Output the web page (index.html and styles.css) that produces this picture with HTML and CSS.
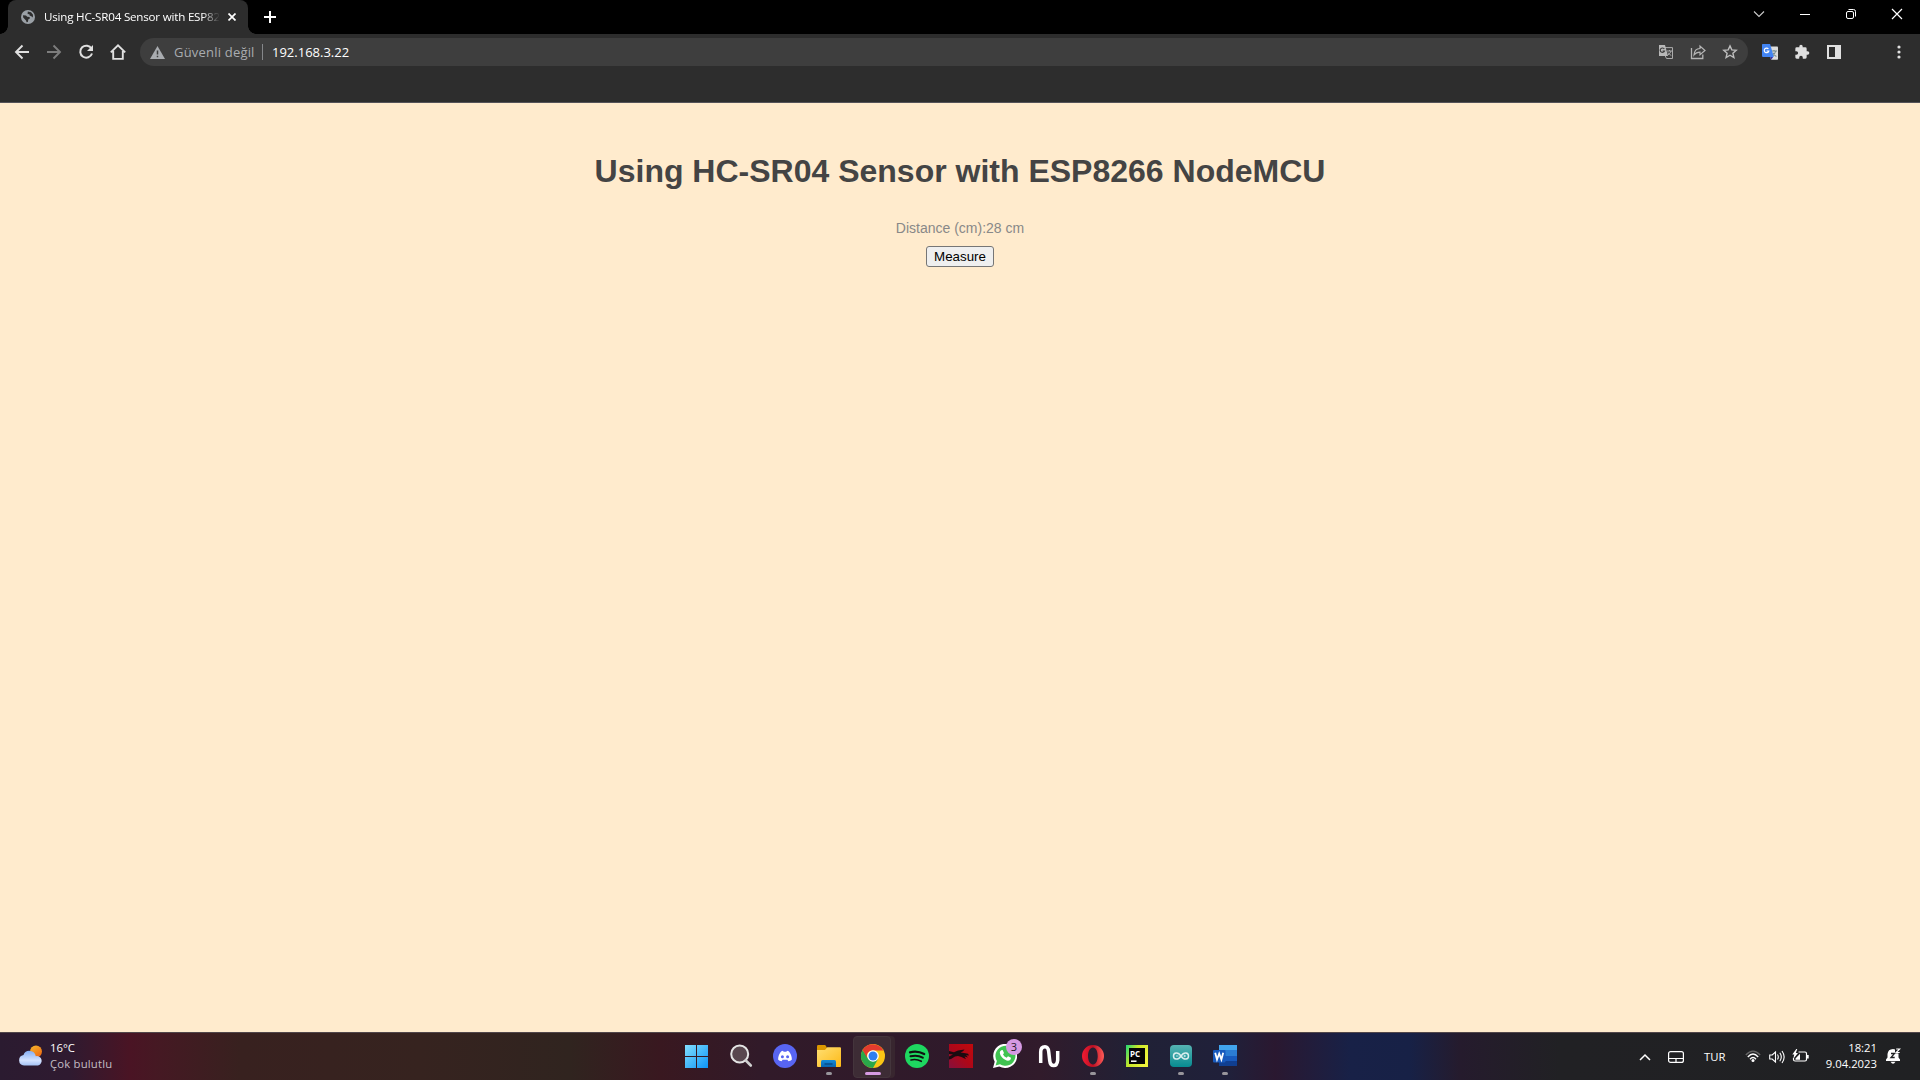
FILE: index.html
```html
<!DOCTYPE html>
<html lang="tr">
<head>
<meta charset="utf-8">
<title>Using HC-SR04 Sensor with ESP8266 NodeMCU</title>
<link rel="stylesheet" href="styles.css">
</head>
<body>
<div class="desktop">
  <header class="titlebar">
    <div class="tab">
      <svg class="globe" viewBox="0 0 14 14"><circle cx="7" cy="7" r="7" fill="#9aa0a6"/><path d="M2 5.200 5 5.400 6.200 6.800 8.600 6.900 8.900 8.600 7.400 9.300 6.800 12 5.600 12.200 5 10.400 2.200 7.600ZM6.800 1.600 10 2.200 12 4.800 11.800 7.400 10.300 6.200 8.600 5.600 8.400 4.200 6.600 3.900Z" fill="#2d2d2d"/></svg>
      <span class="tab-title">Using HC-SR04 Sensor with ESP82</span>
      <svg class="tab-close" viewBox="0 0 8 8"><path d="M.5.5l7 7M7.500.5l-7 7" stroke="#fff" stroke-width="1.700"/></svg>
    </div>
    <svg class="new-tab" viewBox="0 0 12 12"><path d="M6 0v12M0 6h12" stroke="#fff" stroke-width="2"/></svg>
    <div class="window-controls">
      <svg viewBox="0 0 46 28"><path d="M18 11.500l5 5 5-5" fill="none" stroke="#ccc" stroke-width="1.100"/></svg>
      <svg viewBox="0 0 46 28"><path d="M18 14.500h10" stroke="#fff"/></svg>
      <svg viewBox="0 0 46 28"><rect x="18.500" y="11.500" width="7" height="7" rx="1.500" fill="none" stroke="#fff"/><path d="M20.500 9.500h5a2 2 0 0 1 2 2v5" fill="none" stroke="#fff"/></svg>
      <svg viewBox="0 0 46 28"><path d="M18 9l10 10M28 9l-10 10" stroke="#fff" stroke-width="1.200"/></svg>
    </div>
  </header>

  <nav class="toolbar">
    <div class="nav-buttons">
      <svg viewBox="0 0 16 16"><path d="M15 8H2M8.500 1.500 2 8l6.500 6.500" fill="none" stroke="#e0e0e0" stroke-width="1.900"/></svg>
      <svg viewBox="0 0 16 16"><path d="M1 8h13M7.500 1.500 14 8l-6.500 6.500" fill="none" stroke="#7d7d7d" stroke-width="1.900"/></svg>
      <svg viewBox="0 0 16 16"><path d="M13.500 4.700A6 6 0 1 0 14 9.500" fill="none" stroke="#e0e0e0" stroke-width="2"/><path d="M15 1v6H9Z" fill="#e0e0e0"/></svg>
      <svg viewBox="0 0 16 16"><path d="M.8 8.400 8 1.400l7.200 7M3.200 7v7.900h9.600V7" fill="none" stroke="#e0e0e0" stroke-width="1.900"/></svg>
    </div>
    <div class="omnibox">
      <svg class="warning" viewBox="0 0 15 13"><path d="M7.500 0 15 13H0Z" fill="#a9acb0"/><path d="M7.500 4.500v4M7.500 9.700v1.600" stroke="#3e3e3e" stroke-width="1.500"/></svg>
      <span class="security">Güvenli değil</span>
      <span class="divider"></span>
      <span class="url">192.168.3.22</span>
      <div class="omnibox-icons">
        <svg viewBox="0 0 16 16"><path d="M7 3.600h7.500v10.900H8.500L7 11.500" fill="none" stroke="#aaa"/><path d="M1 1h6l3 11H1Z" fill="#b8b8b8"/><path d="M6.300 5A2.200 2.200 0 1 0 6.500 7H4.600" fill="none" stroke="#3e3e3e" stroke-width="1.200"/><path d="M9 7h5M11.500 6v1M13 7q-.7 2.500-3 4M10 8.500q1.200 2 3.300 3" fill="none" stroke="#aaa"/></svg>
        <svg viewBox="0 0 16 16"><path d="M1.500 4v10.500h11.300v-4" fill="none" stroke="#b5b5b5" stroke-width="1.300"/><path d="M4 11C4.300 7 6.500 4.600 10 4.500V2l5 4.500-5 4.200V8.200C7.400 8.200 5.500 9 4 11Z" fill="none" stroke="#b5b5b5" stroke-width="1.200"/></svg>
        <svg viewBox="0 0 16 16"><path d="M8 1.900l1.800 4 4.400.4-3.300 2.900 1 4.300L8 11.200l-3.900 2.300 1-4.300-3.300-2.900 4.400-.4Z" fill="none" stroke="#bdbdbd" stroke-width="1.400"/></svg>
      </div>
    </div>
    <div class="extensions">
      <svg viewBox="0 0 16 16"><path d="M6 2.600h9.200q.8 0 .8.800V15q0 .8-.8.800H9Z" fill="#dcdcdc"/><path d="M9 7h6M12 6v1M13.700 7q-.7 3-3.300 5M10.800 8.700q1.200 2.500 3.600 3.700" fill="none" stroke="#72898e" stroke-width="1.100"/><path d="M8.300 12.800h3L9 15.900Z" fill="#3730a8"/><path d="M.8 0h7.300l3.700 12.900H.8A.8.800 0 0 1 0 12.100V.8Q0 0 .8 0Z" fill="#4285f4"/><path d="M6.400 5A2.300 2.300 0 1 0 6.800 7H4.600" fill="none" stroke="#fff" stroke-width="1.200"/></svg>
      <svg viewBox="0 0 24 24"><path d="M20.500 11H19V7a2 2 0 0 0-2-2h-4V3.500a2.500 2.500 0 0 0-5 0V5H4a2 2 0 0 0-2 2v3.800h1.500a2.700 2.700 0 0 1 0 5.400H2V20a2 2 0 0 0 2 2h3.800v-1.500a2.700 2.700 0 0 1 5.400 0V22H17a2 2 0 0 0 2-2v-4h1.500a2.500 2.500 0 0 0 0-5Z" fill="#dedede"/></svg>
      <svg viewBox="0 0 16 16"><path d="M1 1h14v14H1ZM3 3v10h6V3Z" fill="#e0e0e0" fill-rule="evenodd"/></svg>
    </div>
    <svg class="more" viewBox="0 0 16 16"><g fill="#e0e0e0"><circle cx="8" cy="3" r="1.600"/><circle cx="8" cy="8" r="1.600"/><circle cx="8" cy="13" r="1.600"/></g></svg>
  </nav>

  <main class="page">
    <h1>Using HC-SR04 Sensor with ESP8266 NodeMCU</h1>
    <p>Distance (cm):28 cm</p>
    <button type="button">Measure</button>
  </main>

  <footer class="taskbar">
    <div class="weather">
      <svg viewBox="0 0 26 24"><defs><linearGradient id="sun" x2=".6" y2="1"><stop stop-color="#f6b92d"/><stop offset="1" stop-color="#ee6c13"/></linearGradient><linearGradient id="cloud" x2="0" y2="1"><stop stop-color="#84aef5"/><stop offset=".65" stop-color="#d3e2ff"/><stop offset="1" stop-color="#a5c2f4"/></linearGradient></defs><circle cx="18" cy="7.500" r="6" fill="url(#sun)"/><path d="M6 21.500a5.300 5.300 0 0 1-.5-10.500 6.400 6.400 0 0 1 12.300 1.200 4.700 4.700 0 1 1 2.200 9.300Z" fill="url(#cloud)"/></svg>
      <div class="weather-text"><span>16°C</span><span class="condition">Çok bulutlu</span></div>
    </div>

    <div class="apps">
      <div class="app"><svg viewBox="0 0 24 24"><defs><linearGradient id="win" gradientUnits="userSpaceOnUse" x1="0" y1="0" x2="24" y2="24"><stop stop-color="#85e1ff"/><stop offset="1" stop-color="#0a91f5"/></linearGradient></defs><path d="M0 1h11v11H0ZM12 1h11v11H12ZM0 13h11v11H0ZM12 13h11v11H12Z" fill="url(#win)"/></svg></div>
      <div class="app"><svg viewBox="0 0 24 24"><circle cx="10.700" cy="10" r="8.500" fill="#59474f" stroke="#e4e4e4" stroke-width="2"/><path d="M16.800 16.500l5 5" stroke="#d0d0d0" stroke-width="2.600" stroke-linecap="round"/></svg></div>
      <div class="app"><svg viewBox="0 0 24 24"><circle cx="12" cy="12" r="12" fill="#5865f2"/><path d="M8.400 7.200 10 6.700l.6 1h2.800l.6-1 1.700.5c2 1.800 3.200 5.400 3.200 8.300-1 1-2.200 1.500-3.500 1.800l-1-1.500H9.600l-1 1.500c-1.300-.3-2.500-.8-3.500-1.800 0-3 1.200-6.500 3.300-8.300Z" fill="#fff"/><circle cx="9.400" cy="12.800" r="1.500" fill="#5865f2"/><circle cx="14.600" cy="12.800" r="1.500" fill="#5865f2"/></svg></div>
      <div class="app open"><svg viewBox="0 0 24 24"><defs><linearGradient id="fold" x2="1" y2="1"><stop stop-color="#ffdf73"/><stop offset="1" stop-color="#fdb916"/></linearGradient><linearGradient id="dock" x2="0" y2="1"><stop stop-color="#138cda"/><stop offset="1" stop-color="#0864af"/></linearGradient></defs><path d="M0 2.200Q0 1 1.200 1h7L10 3.500V7H0Z" fill="#dc9800"/><path d="M0 6h8l2.300-2.700H23q1 0 1 1V22q0 1-1 1H1q-1 0-1-1Z" fill="url(#fold)"/><path d="M4 23v-5.500Q4 16 5.500 16h12q1.500 0 1.500 1.500V23Z" fill="url(#dock)"/><path d="M7.500 20h8" stroke="#064d89" stroke-width="1.500"/></svg></div>
      <div class="app active"><svg viewBox="0 0 24 24"><circle cx="12" cy="12" r="12" fill="#fbc615"/><path d="M1.600 6A12 12 0 0 0 12 24l5-9-5 2-5-3Z" fill="#2aa84a"/><path d="M1.600 6A12 12 0 0 1 22.400 6.500H12A5.500 5.500 0 0 0 6.800 15Z" fill="#e33b2e"/><circle cx="12" cy="12" r="5.800" fill="#fff"/><circle cx="12" cy="12" r="4.500" fill="#2f7ff0"/></svg></div>
      <div class="app"><svg viewBox="0 0 24 24"><circle cx="12" cy="12" r="12" fill="#1ed760"/><g fill="none" stroke="#111" stroke-linecap="round"><path d="M5 8.300q7.300-2 14.200 1.700" stroke-width="2.300"/><path d="M5.500 12.300q6.700-1.800 12.300 1.400" stroke-width="2"/><path d="M6 16q5.500-1.300 10.300 1.300" stroke-width="1.600"/></g></svg></div>
      <div class="app"><svg viewBox="0 0 24 24"><defs><linearGradient id="red" x2="1" y1="1" y2="0"><stop stop-color="#86103d"/><stop offset=".5" stop-color="#ae0718"/><stop offset="1" stop-color="#c2090c"/></linearGradient></defs><path d="M0 0h24v24H0Z" fill="url(#red)"/><path d="M0 7 5 8.300 9 6.500 15.500 5.500 14 7.300 11.500 8.500 15 9 19 9.800 20 11.500 17 11.300 19 13.500 15.500 12.500 17 15.300 12.500 13 9 12 6 12.500 2 15 0 15.500V12.500L4 10.500 0 10Z" fill="#1a0b10"/></svg></div>
      <div class="app"><svg viewBox="0 0 24 24"><path d="M0 24 1.700 17.800A12 12 0 1 1 6.300 22.400Z" fill="#fff"/><path d="M2.600 21.400 3.900 17A10 10 0 1 1 7 20.200Z" fill="#40c351"/><path d="M8.300 6.300 9.600 6l1.400 3-1 1.400q1.200 2.300 3.700 3.300L15 12.300l3 1.400c.1 2-1.500 3-3 3-3.500-.4-8-4.500-8.200-8 0-1 .7-2 1.500-2.400Z" fill="#fff"/></svg><span class="badge">3</span></div>
      <div class="app"><svg viewBox="0 0 24 24"><path d="M3.700 19V8Q3.700 2.700 8 2.700q3.200 0 3.700 5l1 8.800q.5 5 4 5t4-5.500V7" fill="none" stroke="#fff" stroke-width="3.500"/></svg></div>
      <div class="app open"><svg viewBox="0 0 24 24"><defs><linearGradient id="opera" x2="1" y2="0"><stop stop-color="#f11b32"/><stop offset=".5" stop-color="#bb1023"/><stop offset="1" stop-color="#ff5b58"/></linearGradient></defs><path d="M12 1a11 11 0 1 0 0 22 11 11 0 0 0 0-22ZM12 3.500c3 0 4.700 4 4.700 8.500S15 20.500 12 20.500 7 16.500 7 12s2-8.500 5-8.500Z" fill="url(#opera)" fill-rule="evenodd"/></svg></div>
      <div class="app"><svg viewBox="0 0 24 24"><defs><linearGradient id="py" x2="1" y2=".5"><stop stop-color="#1ed779"/><stop offset=".45" stop-color="#c6e629"/><stop offset="1" stop-color="#edf33b"/></linearGradient></defs><path d="M1 1h22v22H1Z" fill="url(#py)"/><path d="M4 4h16v16H4Z" fill="#050505"/><text x="5" y="12.500" class="pc">PC</text><path d="M6 17.200h5.500" stroke="#fff" stroke-width="1.500"/></svg></div>
      <div class="app open"><svg viewBox="0 0 24 24"><defs><linearGradient id="ard" x2="0" y2="1"><stop stop-color="#56b3b2"/><stop offset="1" stop-color="#078b91"/></linearGradient></defs><rect x="1" y="1" width="22" height="22" rx="4" fill="url(#ard)"/><path d="M12 12C9 7.300 4.500 8.500 4.500 12S9 16.700 12 12s7.500-3.500 7.500 0S15 16.700 12 12Z" fill="none" stroke="#d9eeee" stroke-width="1.500"/><path d="M7 12h2.500M14.500 12H17M15.700 10.800v2.400" stroke="#d9eeee" stroke-width=".8"/></svg></div>
      <div class="app open"><svg viewBox="0 0 24 24"><path d="M6 1h18v6H6Z" fill="#41a5ee"/><path d="M6 6h18v6H6Z" fill="#2b7cd3"/><path d="M6 12h18v5H6Z" fill="#185abd"/><path d="M6 17h18v5H6Z" fill="#103f91"/><rect y="6" width="12.500" height="12.500" rx="1" fill="#185abd"/><path d="M2.200 8.800 4 15.500 6.200 9.500 8.400 15.500 10.200 8.800" fill="none" stroke="#fff" stroke-width="1.800"/></svg></div>
    </div>

    <div class="tray">
      <svg class="chevron" viewBox="0 0 12 8"><path d="M1 7l5-5 5 5" fill="none" stroke="#fff" stroke-width="1.500"/></svg>
      <svg class="touchpad" viewBox="0 0 16 12"><rect x=".6" y=".6" width="14.800" height="10.800" rx="2" fill="none" stroke="#fff" stroke-width="1.200"/><path d="M1 7.500h14M8 7.500V11" stroke="#fff" stroke-width="1.200"/></svg>
      <span class="language">TUR</span>
      <svg class="wifi" viewBox="0 0 16 13"><path d="M.8 5Q8-2.800 15.200 5" fill="none" stroke="#666" stroke-width="1.300"/><path d="M2.800 7Q8 1 13.200 7M5 9.200q3-3.400 6 0" fill="none" stroke="#fff" stroke-width="1.300"/><circle cx="8" cy="10.500" r="1.500" fill="#fff"/></svg>
      <svg class="sound" viewBox="0 0 16 14"><path d="M.7 5h2.500L6.500 2v10L3.200 9H.7Z" fill="none" stroke="#fff" stroke-width="1.100"/><path d="M8.500 4.500q1.600 2.500 0 5M10.800 2.800q3 4.200 0 8.400M13 1q4.300 6 0 12" fill="none" stroke="#fff" stroke-width="1.100"/></svg>
      <svg class="battery" viewBox="0 0 17 14"><path d="M6.500 3H13q1.500 0 1.500 1.500v6Q14.500 12 13 12H3Q1.500 12 1.500 10.500V9" fill="none" stroke="#fff" stroke-width="1.200"/><path d="M15 6h1.700v3.500H15ZM3.500 9.500 8 4.700v6H3.500Z" fill="#fff"/><path d="M4.300 0 .3 5.500h2L1.200 10l4.800-6H3.800L5.300 0Z" fill="#fff"/></svg>
      <div class="clock"><span>18:21</span><span>9.04.2023</span></div>
      <svg class="bell" viewBox="0 0 15 16"><path d="M0 11.500 1.500 9.500V6Q2 1.200 7 1q5 .2 5.500 5v3.500l1.500 2V13H0Z" fill="#fff"/><path d="M4.500 13.800h5Q7 17.800 4.500 13.800Z" fill="#fff"/><path d="M5 5.500h3.500L5 9.500h3.700" fill="none" stroke="#202123" stroke-width="1.300"/><path d="M9 .5h5.500v4.800H9Z" fill="#202123"/><path d="M10.200 1h3.500l-3.500 3.500h3.500" fill="none" stroke="#fff" stroke-width="1.100"/></svg>
    </div>
  </footer>
</div>
</body>
</html>
```

FILE: styles.css
```css
* { box-sizing: border-box; }
body { margin: 0; background: #000; font-family: "Open Sans", sans-serif; }
svg { display: block; flex: none; }
.desktop { width: 1920px; height: 1080px; display: flex; flex-direction: column; overflow: hidden; }

.titlebar { height: 34px; flex: none; display: flex; background: #000; padding-left: 8px; }
.tab { position: relative; width: 240px; height: 34px; display: flex; align-items: center; padding: 0 12px 0 13px; background: #2d2d2d; border-radius: 8px 8px 0 0; }
.tab::before, .tab::after { content: ""; position: absolute; bottom: 0; width: 8px; height: 8px; }
.tab::before { left: -8px; background: radial-gradient(circle at 0 0, transparent 7.5px, #2d2d2d 8px); }
.tab::after { right: -8px; background: radial-gradient(circle at 100% 0, transparent 7.5px, #2d2d2d 8px); }
.globe { width: 14px; height: 14px; }
.tab-title { width: 175px; margin-left: 9px; overflow: hidden; white-space: nowrap; color: #fff; font-size: 11.6px; letter-spacing: -0.2px; line-height: 18px; -webkit-mask-image: linear-gradient(90deg, #000 158px, transparent 176px); mask-image: linear-gradient(90deg, #000 158px, transparent 176px); }
.tab-close { width: 8px; height: 8px; margin-left: 9px; }
.new-tab { width: 12px; height: 12px; margin: 11px 0 0 16px; }
.window-controls { display: flex; margin-left: auto; }
.window-controls svg { width: 46px; height: 28px; }

.toolbar { height: 69px; flex: none; display: flex; align-items: flex-start; padding: 4px 13px 0 14px; background: #2d2d2d; border-bottom: 1px solid #545358; }
.nav-buttons { display: flex; gap: 16px; margin-top: 6px; }
.nav-buttons svg, .omnibox-icons svg, .extensions svg, .more { width: 16px; height: 16px; }
.omnibox { width: 1608px; height: 28px; display: flex; align-items: center; margin-left: 14px; padding: 0 10px; border-radius: 14px; background: #3e3e3e; color: #fff; font-size: 13px; line-height: 28px; }
.warning { width: 15px; height: 13px; }
.security { width: 80px; margin-left: 9px; color: #a9acb0; letter-spacing: 0.2px; white-space: nowrap; }
.divider { width: 1px; height: 16px; margin: 0 9px 0 8px; background: #85878a; }
.omnibox-icons { display: flex; gap: 16px; margin-left: auto; }
.extensions { display: flex; gap: 16px; margin: 6px 0 0 14px; }
.more { margin: 6px 0 0 auto; }

.page { flex: 1; display: flex; flex-direction: column; align-items: center; background: #ffebcd; font-family: "Liberation Sans", Arial, sans-serif; }
.page h1 { margin: 50px 0 31px; color: #444; font-size: 32px; line-height: 36px; }
.page p { margin: 0 0 10px; color: #888; font-size: 14px; line-height: 16px; }
.page button { width: 68px; height: 21px; padding: 0; border: 1px solid #767676; border-radius: 3px; background: #efefef; color: #000; font: 13.333px "Liberation Sans", Arial, sans-serif; }

.taskbar { height: 48px; flex: none; display: grid; grid-template-columns: 675px 572px 1fr; border-top: 1px solid #51464a; background: linear-gradient(90deg, #2b1b30 0, #2f1a30 70px, #4a1424 130px, #451923 160px, #38211f 240px, #36231f 420px, #30241f 570px, #391820 660px, #311a29 760px, #2f1a2b 1000px, #311b2b 1040px, #202136 1140px, #20203a 1230px, #2a1830 1275px, #182147 1350px, #172146 1410px, #251b2d 1460px, #212124 1560px, #202123 1920px); }
.weather { display: flex; padding: 11px 0 0 18px; }
.weather svg { width: 26px; height: 24px; }
.weather-text { display: flex; flex-direction: column; margin: -4px 0 0 6px; color: #fff; font-size: 11.3px; line-height: 16px; }
.condition { color: #c4bdc4; letter-spacing: 0.2px; }
.apps { display: grid; grid-template-columns: repeat(13, 44px); }
.app { position: relative; display: flex; justify-content: center; padding-top: 11px; }
.app svg { position: relative; width: 24px; height: 24px; }
.app.open::after { content: ""; position: absolute; left: 19px; top: 39px; width: 6px; height: 3px; border-radius: 2px; background: #98959b; }
.app.active::before { content: ""; position: absolute; left: 2px; top: 3px; width: 36px; height: 40px; border: 1px solid #44353c; border-radius: 4px; background: #3d2c35; box-shadow: 4px 0 0 #38262f; }
.app.active::after { content: ""; position: absolute; left: 14px; top: 39px; width: 16px; height: 3px; border-radius: 2px; background: #d69ae3; }
.badge { position: absolute; left: 23px; top: 6px; width: 16px; height: 16px; border-radius: 8px; background: #d69ae3; color: #24172a; font-size: 11px; line-height: 16px; text-align: center; }
.pc { fill: #fff; font: bold 8px "Open Sans", sans-serif; }
.tray { display: flex; align-items: center; padding: 0 20px 0 392px; color: #fff; font-size: 11.3px; }
.chevron { width: 12px; height: 8px; }
.touchpad { width: 16px; height: 12px; margin-left: 17px; }
.language { width: 23px; margin-left: 20px; }
.wifi { width: 16px; height: 13px; margin-left: 18px; }
.sound { width: 16px; height: 14px; margin-left: 8px; }
.battery { width: 17px; height: 14px; margin: -2px 0 0 7px; }
.clock { width: 60px; display: flex; flex-direction: column; align-items: flex-end; margin: -2px 0 0 8px; line-height: 16px; }
.bell { width: 15px; height: 16px; margin: -1px 0 0 9px; }
```
